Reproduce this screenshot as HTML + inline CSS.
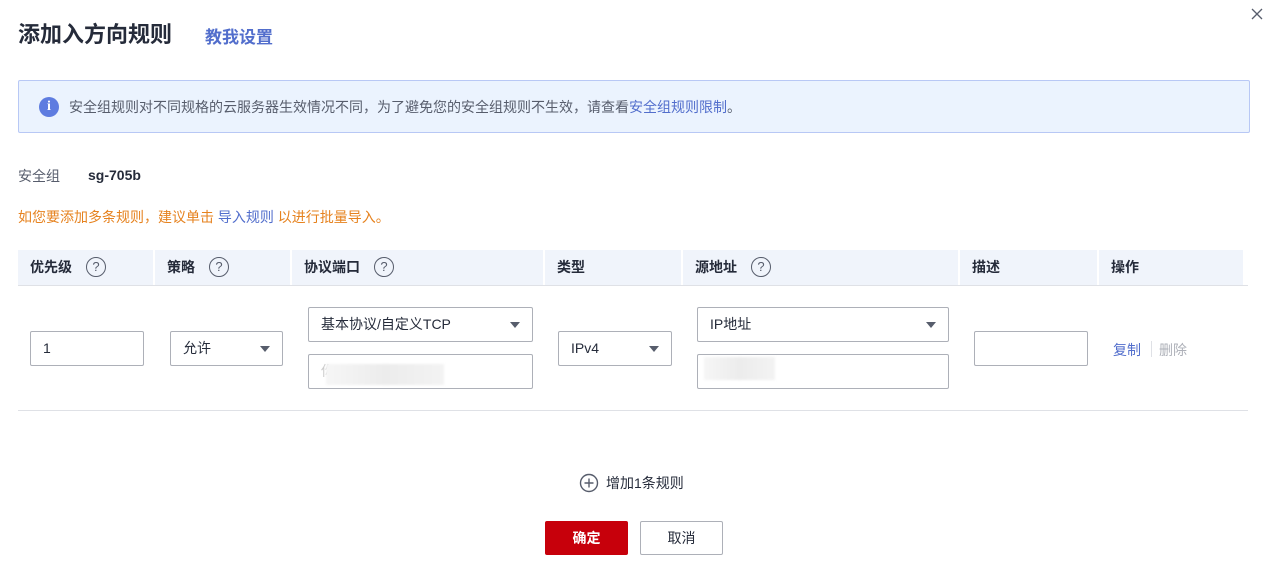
<!DOCTYPE html>
<html><head><meta charset="utf-8"><style>
body{margin:0;width:1284px;height:585px;background:#fff;font-family:"Liberation Sans","Noto Sans CJK SC",sans-serif;font-size:14px;color:#252b3a;position:relative;overflow:hidden}
.a{position:absolute}
.inp{position:absolute;box-sizing:border-box;border:1px solid #adb0b8;border-radius:2px;background:#fff;height:35px;line-height:33px;padding-left:12px;font-size:14px;color:#252b3a}
.tri{position:absolute;right:12px;top:14px;width:0;height:0;border-left:5px solid transparent;border-right:5px solid transparent;border-top:6px solid #575d6c}
.hd{position:absolute;top:250px;height:35px;line-height:35px;background:#f0f4fb;font-weight:bold;font-size:14px;padding-left:12px;box-sizing:border-box;border-right:2px solid #fff}
.q{display:inline-block;width:18px;height:18px;border:1.5px solid #575d6c;border-radius:50%;text-align:center;line-height:18px;font-size:13px;font-weight:normal;color:#575d6c;vertical-align:middle;margin-left:14px;position:relative;top:-1px}
.blur{position:absolute;background:linear-gradient(90deg,#f6f6f6,#ececec,#f3f3f3);filter:blur(1px)}
</style></head><body>
<div class="a" style="left:18px;top:17px;font-size:22px;font-weight:bold;color:#252b3a">添加入方向规则</div>
<div class="a" style="left:205px;top:23px;font-size:17px;font-weight:bold;color:#526ecc">教我设置</div>
<svg class="a" style="left:1251px;top:8px" width="12" height="12" viewBox="0 0 12 12"><path d="M1 1L11 11M11 1L1 11" stroke="#575d6c" stroke-width="1.3"/></svg>
<div class="a" style="left:18px;top:80px;width:1232px;height:53px;box-sizing:border-box;border:1px solid #b8c8f5;background:#ebf3fe;border-radius:2px"></div>
<div class="a" style="left:39px;top:97px;width:20px;height:20px;border-radius:50%;background:#5e7ce0;color:#fff;font-weight:bold;text-align:center;line-height:20px;font-size:14px;font-family:'Liberation Serif',serif">i</div>
<div class="a" style="left:69px;top:97px;font-size:14px;color:#575d6c">安全组规则对不同规格的云服务器生效情况不同，为了避免您的安全组规则不生效，请查看<span style="color:#526ecc">安全组规则限制</span>。</div>
<div class="a" style="left:18px;top:166px;color:#575d6c">安全组</div>
<div class="a" style="left:88px;top:167px;font-weight:bold">sg-705b</div>
<div class="a" style="left:18px;top:207px;color:#e6821e">如您要添加多条规则，建议单击 <span style="color:#526ecc">导入规则</span> 以进行批量导入。</div>

<div class="hd" style="left:18px;width:137px">优先级<span class="q">?</span></div>
<div class="hd" style="left:155px;width:137px">策略<span class="q">?</span></div>
<div class="hd" style="left:292px;width:253px">协议端口<span class="q">?</span></div>
<div class="hd" style="left:545px;width:138px">类型</div>
<div class="hd" style="left:683px;width:277px">源地址<span class="q">?</span></div>
<div class="hd" style="left:960px;width:139px">描述</div>
<div class="hd" style="left:1099px;width:146px">操作</div>
<div class="a" style="left:18px;top:285px;width:1230px;height:1px;background:#dfe1e6"></div>

<div class="inp" style="left:30px;top:331px;width:114px">1</div>
<div class="inp" style="left:170px;top:331px;width:113px">允许<span class="tri"></span></div>
<div class="inp" style="left:308px;top:307px;width:225px">基本协议/自定义TCP<span class="tri"></span></div>
<div class="inp" style="left:308px;top:354px;width:225px;color:#ccc">你</div>
<div class="blur" style="left:326px;top:364px;width:118px;height:21px"></div>
<div class="inp" style="left:558px;top:331px;width:114px">IPv4<span class="tri"></span></div>
<div class="inp" style="left:697px;top:307px;width:252px">IP地址<span class="tri"></span></div>
<div class="inp" style="left:697px;top:354px;width:252px"></div>
<div class="blur" style="left:704px;top:357px;width:71px;height:23px"></div>
<div class="inp" style="left:974px;top:331px;width:114px"></div>
<div class="a" style="left:1113px;top:340px;color:#526ecc">复制</div>
<div class="a" style="left:1151px;top:341px;width:1px;height:16px;background:#dfe1e6"></div>
<div class="a" style="left:1159px;top:340px;color:#adb0b8">删除</div>
<div class="a" style="left:18px;top:410px;width:1230px;height:1px;background:#dfe1e6"></div>

<svg class="a" style="left:579px;top:473px" width="20" height="20" viewBox="0 0 20 20"><circle cx="10" cy="10" r="8.5" fill="none" stroke="#575d6c" stroke-width="1.4"/><path d="M10 5.5V14.5M5.5 10H14.5" stroke="#575d6c" stroke-width="1.4"/></svg>
<div class="a" style="left:606px;top:473px;color:#252b3a">增加1条规则</div>
<div class="a" style="left:545px;top:521px;width:83px;height:34px;background:#c7000b;border-radius:2px;color:#fff;font-weight:bold;text-align:center;line-height:34px">确定</div>
<div class="a" style="left:640px;top:521px;width:83px;height:34px;box-sizing:border-box;border:1px solid #adb0b8;border-radius:2px;text-align:center;line-height:32px">取消</div>
</body></html>
